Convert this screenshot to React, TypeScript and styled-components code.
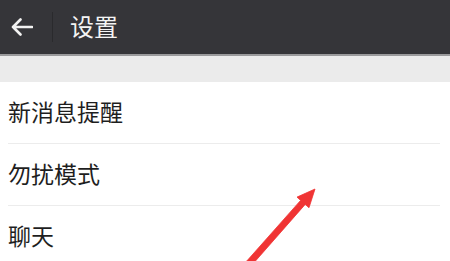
import styled, {createGlobalStyle} from "styled-components";

const GlobalStyle = createGlobalStyle`
    html, body {
        margin: 0;
        padding: 0;
        background: #ffffff;
        overflow: hidden;
    }
    body {
        font-family: "Noto Sans CJK SC", "Noto Sans", sans-serif;
    }
`

const items = ["新消息提醒", "勿扰模式", "聊天"];

export default function App() {
    return (
        <Page>
            <GlobalStyle/>
            <Header>
                <BackButton>
                    <svg width="22" height="18" viewBox="0 0 22 18" fill="none">
                        <path d="M21 9H2M9.5 1.5L2 9l7.5 7.5" stroke="#f2f2f2" strokeWidth="2.6"
                              strokeLinecap="round" strokeLinejoin="round"/>
                    </svg>
                </BackButton>
                <Separator/>
                <Title>设置</Title>
            </Header>
            <Band/>
            <List>
                {items.map((label, i) => (
                    <Row key={label} $last={i === items.length - 1}>
                        <Label>{label}</Label>
                    </Row>
                ))}
            </List>
            {/* red pointer drawn over the screenshot */}
            <Pointer width="100" height="90" viewBox="230 180 100 90">
                <path
                    d="M315 189 L309 207.7 L305.2 204.4 L251.6 265.4 L246.8 261 L300.6 200.4 L297 197.1 Z"
                    fill="#f03434"
                    stroke="#f03434"
                    strokeWidth="0.8"
                    strokeLinejoin="round"
                />
            </Pointer>
        </Page>
    );
}

const Page = styled.div`
    position: relative;
    width: 450px;
    height: 261px;
    overflow: hidden;
    background: #ffffff;
`

const Header = styled.div`
    display: flex;
    align-items: center;
    height: 54px;
    background: #353539;
    border-bottom: 2px solid #9a9a9c;
`

const BackButton = styled.div`
    display: flex;
    align-items: center;
    justify-content: center;
    width: 43px;
    height: 100%;
`

const Separator = styled.div`
    width: 1px;
    height: 30px;
    margin-left: 9px;
    background: #2a2a2d;
`

const Title = styled.div`
    margin-left: 17px;
    color: #f4f4f4;
    font-size: 24px;
    line-height: 1;
    padding-bottom: 2px;
`

const Band = styled.div`
    height: 26px;
    background: #ebebeb;
`

const List = styled.div`
    display: flex;
    flex-direction: column;
    padding: 0 10px 0 8px;
`

const Row = styled.div<{ $last: boolean }>`
    display: flex;
    align-items: center;
    height: 61px;
    border-bottom: 1px solid ${p => p.$last ? "transparent" : "#ececec"};
`

const Label = styled.span`
    color: #1e1e1e;
    font-size: 23px;
    line-height: 1;
    padding-bottom: 2px;
`

const Pointer = styled.svg`
    position: absolute;
    left: 230px;
    top: 180px;
`
